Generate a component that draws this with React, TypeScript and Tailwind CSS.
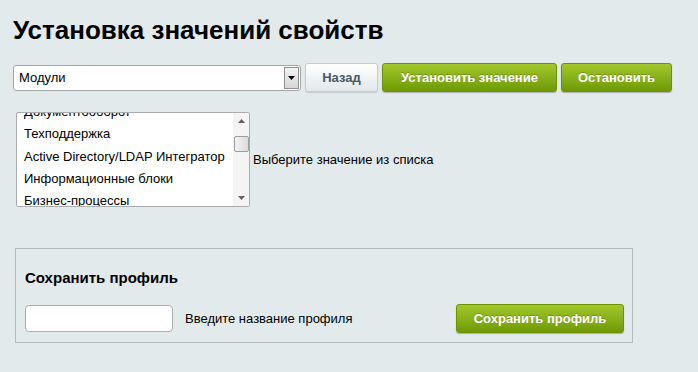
import React from 'react';

const modules = [
  'Документооборот',
  'Техподдержка',
  'Active Directory/LDAP Интегратор',
  'Информационные блоки',
  'Бизнес-процессы',
];

const greenBtn =
  'h-[29px] rounded-[3px] border border-[#6c9200] bg-linear-to-b from-[#a2c82a] to-[#6f9a02] text-[13px] font-bold text-white shadow-[0_1px_1px_rgba(0,0,0,0.25)] [text-shadow:0_-1px_0_rgba(60,80,0,0.35)]';

function ListBox() {
  return (
    <div className="relative flex h-[95px] w-[234px] overflow-hidden rounded-[2px] border border-[#a9adb0] bg-white">
      <div className="flex-1 overflow-hidden pl-[7px]">
        <div className="-mt-[12px]">
          {modules.map((m) => (
            <div key={m} className="h-[22.3px] leading-[22.3px] text-[13px] text-black whitespace-nowrap">
              {m}
            </div>
          ))}
        </div>
      </div>
      {/* scrollbar */}
      <div className="flex w-[16px] flex-col items-center bg-[#f4f4f4]">
        <div className="flex h-[16px] w-full items-center justify-center">
          <svg width="7" height="4" viewBox="0 0 7 4"><path d="M3.5 0L7 4H0z" fill="#606060" /></svg>
        </div>
        <div className="mt-[7px] h-[16px] w-[15px] rounded-[2px] border border-[#9c9c9c] bg-linear-to-r from-[#f2f2f2] to-[#dcdcdc]" />
        <div className="flex-1" />
        <div className="flex h-[16px] w-full items-center justify-center">
          <svg width="7" height="4" viewBox="0 0 7 4"><path d="M0 0H7L3.5 4z" fill="#606060" /></svg>
        </div>
      </div>
    </div>
  );
}

export default function App() {
  return (
    <div className="min-h-[372px] bg-[#e3eaec] pl-[13px] pt-[15px] font-['Liberation_Sans',Arial,sans-serif] text-black">
      <h1 className="text-[26px] font-bold leading-[30px]">Установка значений свойств</h1>

      <div className="mt-[18px] flex h-[29px] items-center">
        <div className="flex h-[26px] w-[288px] items-center rounded-[3px] border border-[#a3a7aa] bg-white pl-[5px]">
          <span className="flex-1 text-[13px]">Модули</span>
          <div className="mr-[1px] flex h-[22px] w-[15px] items-center justify-center border border-[#8f8f8f] bg-linear-to-b from-[#f4f4f4] to-[#d6d6d6]">
            <svg width="7" height="4" viewBox="0 0 7 4"><path d="M0 0H7L3.5 4z" fill="#000" /></svg>
          </div>
        </div>
        <button className="ml-[4px] h-[29px] w-[73px] rounded-[3px] border border-[#c3ccd0] bg-linear-to-b from-white to-[#e2e8eb] text-[13px] font-bold text-[#4a5963] shadow-[0_1px_1px_rgba(0,0,0,0.12)]">
          Назад
        </button>
        <button className={`ml-[4px] w-[175px] ${greenBtn}`}>Установить значение</button>
        <button className={`ml-[4px] w-[111px] ${greenBtn}`}>Остановить</button>
      </div>

      <div className="mt-[20px] ml-[3px] flex items-center">
        <ListBox />
        <span className="ml-[3px] text-[13px]">Выберите значение из списка</span>
      </div>

      <div className="mt-[41px] ml-[2px] h-[95px] w-[618px] border border-[#b4bbbf] pl-[9px] pr-[8px] pt-[20px]">
        <h2 className="text-[15px] font-bold leading-[18px]">Сохранить профиль</h2>
        <div className="mt-[17px] flex h-[29px] items-center">
          <input
            type="text"
            className="h-[27px] w-[148px] rounded-[4px] border border-[#a9b0b4] bg-white outline-none"
          />
          <span className="ml-[12px] text-[13px]">Введите название профиля</span>
          <button className={`ml-auto w-[168px] ${greenBtn}`}>Сохранить профиль</button>
        </div>
      </div>
    </div>
  );
}
